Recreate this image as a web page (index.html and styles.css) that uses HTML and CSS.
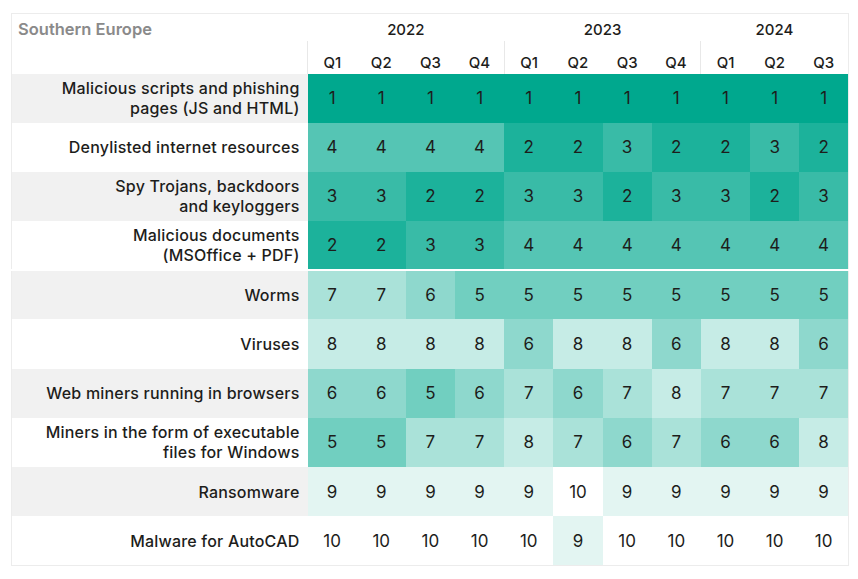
FILE: index.html
```html
<!DOCTYPE html>
<html>
<head>
<meta charset="utf-8">
<link rel="stylesheet" href="styles.css">
</head>
<body>
<div class="wrap">
<table class="heat">
  <colgroup>
    <col class="c-label">
    <col span="11" class="c-val">
  </colgroup>
  <thead>
    <tr class="years">
      <th class="region">Southern Europe</th>
      <th colspan="4">2022</th>
      <th colspan="4">2023</th>
      <th colspan="3">2024</th>
    </tr>
    <tr class="quarters">
      <th class="blank"></th>
      <th class="gs">Q1</th><th>Q2</th><th>Q3</th><th>Q4</th>
      <th class="gs">Q1</th><th>Q2</th><th>Q3</th><th>Q4</th>
      <th class="gs">Q1</th><th>Q2</th><th>Q3</th>
    </tr>
  </thead>
  <tbody id="body">
  </tbody>
</table>
</div>
<script src="app.js"></script>
</body>
</html>
```
FILE: styles.css
```css
* { box-sizing: border-box; }
html, body { margin: 0; background: #fff; }
body { font-family: "Inter", "Noto Sans", sans-serif; color: #1d1d1b; }
.wrap { padding: 13px 0 0 11px; }
.heat {
  border-collapse: collapse;
  table-layout: fixed;
  width: 838px;
  border: 1px solid #ececec;
}
.c-label { width: 296px; }
.heat th, .heat td { padding: 0; }
.years th {
  height: 27px;
  font-size: 15px;
  font-weight: 500;
  text-align: center;
  vertical-align: bottom;
  padding-bottom: 2px;
  color: #1d1d1b;
}
.years th.region {
  text-align: left;
  padding-left: 6px;
  color: #8a8a8a;
  font-weight: 600;
  font-size: 16.5px;
}
.quarters th {
  height: 33px;
  font-size: 15px;
  font-weight: 500;
  text-align: center;
  vertical-align: bottom;
  padding-bottom: 2px;
}
.quarters th.gs { border-left: 1px solid #e8e8e8; }
.row td { height: 49.2px; text-align: center; font-size: 17px; font-weight: 400; }
.row td.label {
  text-align: right;
  padding-right: 8px;
  font-size: 16px;
  letter-spacing: 0.2px;
  font-weight: 500;
  line-height: 20px;
  color: #1d1d1b;
}
.row.odd td.label { background: #f1f1f1; }
.row.sep td { border-top: 2px solid #fff; }
```
FILE: app.js
```js
var labels = [
  "Malicious scripts and phishing<br>pages (JS and HTML)",
  "Denylisted internet resources",
  "Spy Trojans, backdoors<br>and keyloggers",
  "Malicious documents<br>(MSOffice + PDF)",
  "Worms",
  "Viruses",
  "Web miners running in browsers",
  "Miners in the form of executable<br>files for Windows",
  "Ransomware",
  "Malware for AutoCAD"
];
var data = [
  [1,1,1,1,1,1,1,1,1,1,1],
  [4,4,4,4,2,2,3,2,2,3,2],
  [3,3,2,2,3,3,2,3,3,2,3],
  [2,2,3,3,4,4,4,4,4,4,4],
  [7,7,6,5,5,5,5,5,5,5,5],
  [8,8,8,8,6,8,8,6,8,8,6],
  [6,6,5,6,7,6,7,8,7,7,7],
  [5,5,7,7,8,7,6,7,6,6,8],
  [9,9,9,9,9,10,9,9,9,9,9],
  [10,10,10,10,10,9,10,10,10,10,10]
];
function color(n) {
  var t = (n - 1) / 9;
  var r = Math.round(0 + (255 - 0) * t);
  var g = Math.round(168 + (255 - 168) * t);
  var b = Math.round(142 + (255 - 142) * t);
  return "rgb(" + r + "," + g + "," + b + ")";
}
var body = document.getElementById("body");
var html = "";
for (var i = 0; i < data.length; i++) {
  var cls = "row" + (i % 2 === 0 ? " odd" : "") + (i === 4 ? " sep" : "");
  html += '<tr class="' + cls + '"><td class="label">' + labels[i] + "</td>";
  for (var j = 0; j < data[i].length; j++) {
    var v = data[i][j];
    html += '<td style="background:' + color(v) + '">' + v + "</td>";
  }
  html += "</tr>";
}
body.innerHTML = html;
```
